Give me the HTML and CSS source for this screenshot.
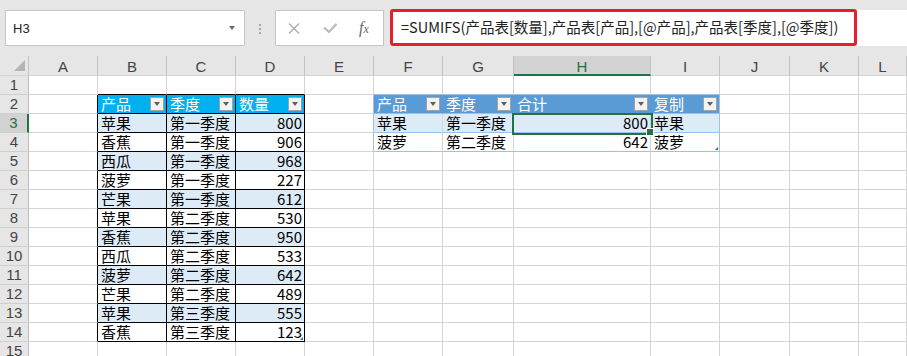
FILE: index.html
```html
<!DOCTYPE html>
<html lang="zh-CN">
<head>
  <meta charset="UTF-8" />
  <title>SUMIFS 产品表</title>
  <link rel="stylesheet" href="styles.css">
</head>
<body>
  <div class="formula-bar">
    <div class="name-box"><span>H3</span><i class="caret"></i></div>
    <div class="grip"><i></i><i></i><i></i></div>
    <div class="fx-box">
      <svg class="fx-cancel" width="12" height="11" viewBox="0 0 12 11"><path d="M1 0.5 L11 10.5 M11 0.5 L1 10.5" stroke="#a9a9a9" stroke-width="1.3" fill="none"/></svg>
      <svg class="fx-enter" width="14" height="10" viewBox="0 0 14 10"><path d="M1 4.5 L6 9 L13.5 0.8" stroke="#bababa" stroke-width="2.2" fill="none"/></svg>
      <span class="fx">f<small>x</small></span>
    </div>
    <div class="formula-input">
      <div class="formula-mark">=SUMIFS(产品表[数量],产品表[产品],[@产品],产品表[季度],[@季度])</div>
    </div>
  </div>

  <div class="sheet">
    <!-- column headers -->
    <div class="c corner"><svg width="11" height="11" viewBox="0 0 11 11"><polygon points="11,0 11,11 0,11" fill="#b4b4b4"/></svg></div>
    <div class="c ch">A</div><div class="c ch">B</div><div class="c ch">C</div><div class="c ch">D</div>
    <div class="c ch">E</div><div class="c ch">F</div><div class="c ch">G</div><div class="c ch sel-h">H</div>
    <div class="c ch">I</div><div class="c ch">J</div><div class="c ch">K</div><div class="c ch">L</div>

    <!-- row 1 -->
    <div class="c rh">1</div>
    <div class="c"></div><div class="c e-b"></div><div class="c e-b"></div><div class="c e-b"></div>
    <div class="c"></div><div class="c e2-b"></div><div class="c e2-b"></div><div class="c e2-b"></div>
    <div class="c e2-b"></div><div class="c"></div><div class="c"></div><div class="c"></div>

    <!-- row 2 -->
    <div class="c rh">2</div>
    <div class="c e-r"></div>
    <div class="c t1h"><span>产品</span><i class="dd"></i></div>
    <div class="c t1h"><span>季度</span><i class="dd"></i></div>
    <div class="c t1h"><span>数量</span><i class="dd"></i></div>
    <div class="c e2-r"></div>
    <div class="c t2h"><span>产品</span><i class="dd"></i></div>
    <div class="c t2h"><span>季度</span><i class="dd"></i></div>
    <div class="c t2h"><span>合计</span><i class="dd"></i></div>
    <div class="c t2h t2-end"><span>复制</span><i class="dd"></i></div>
    <div class="c"></div><div class="c"></div><div class="c"></div>

    <!-- row 3 -->
    <div class="c rh sel-r">3</div>
    <div class="c e-r"></div>
    <div class="c t1 band">苹果</div><div class="c t1 band">第一季度</div><div class="c t1 band num">800</div>
    <div class="c e2-r"></div>
    <div class="c t2 band">苹果</div><div class="c t2 band">第一季度</div>
    <div class="c t2 band num active">800</div>
    <div class="c t2 band t2-end">苹果</div>
    <div class="c"></div><div class="c"></div><div class="c"></div>

    <!-- row 4 -->
    <div class="c rh">4</div>
    <div class="c e-r"></div>
    <div class="c t1">香蕉</div><div class="c t1">第一季度</div><div class="c t1 num">906</div>
    <div class="c e2-r"></div>
    <div class="c t2">菠萝</div><div class="c t2">第二季度</div>
    <div class="c t2 num">642</div>
    <div class="c t2 t2-end rz">菠萝</div>
    <div class="c"></div><div class="c"></div><div class="c"></div>

    <!-- row 5 -->
    <div class="c rh">5</div>
    <div class="c e-r"></div>
    <div class="c t1 band">西瓜</div><div class="c t1 band">第一季度</div><div class="c t1 band num">968</div>
    <div class="c"></div><div class="c"></div><div class="c"></div><div class="c"></div>
    <div class="c"></div><div class="c"></div><div class="c"></div><div class="c"></div>

    <!-- row 6 -->
    <div class="c rh">6</div>
    <div class="c e-r"></div>
    <div class="c t1">菠萝</div><div class="c t1">第一季度</div><div class="c t1 num">227</div>
    <div class="c"></div><div class="c"></div><div class="c"></div><div class="c"></div>
    <div class="c"></div><div class="c"></div><div class="c"></div><div class="c"></div>

    <!-- row 7 -->
    <div class="c rh">7</div>
    <div class="c e-r"></div>
    <div class="c t1 band">芒果</div><div class="c t1 band">第一季度</div><div class="c t1 band num">612</div>
    <div class="c"></div><div class="c"></div><div class="c"></div><div class="c"></div>
    <div class="c"></div><div class="c"></div><div class="c"></div><div class="c"></div>

    <!-- row 8 -->
    <div class="c rh">8</div>
    <div class="c e-r"></div>
    <div class="c t1">苹果</div><div class="c t1">第二季度</div><div class="c t1 num">530</div>
    <div class="c"></div><div class="c"></div><div class="c"></div><div class="c"></div>
    <div class="c"></div><div class="c"></div><div class="c"></div><div class="c"></div>

    <!-- row 9 -->
    <div class="c rh">9</div>
    <div class="c e-r"></div>
    <div class="c t1 band">香蕉</div><div class="c t1 band">第二季度</div><div class="c t1 band num">950</div>
    <div class="c"></div><div class="c"></div><div class="c"></div><div class="c"></div>
    <div class="c"></div><div class="c"></div><div class="c"></div><div class="c"></div>

    <!-- row 10 -->
    <div class="c rh">10</div>
    <div class="c e-r"></div>
    <div class="c t1">西瓜</div><div class="c t1">第二季度</div><div class="c t1 num">533</div>
    <div class="c"></div><div class="c"></div><div class="c"></div><div class="c"></div>
    <div class="c"></div><div class="c"></div><div class="c"></div><div class="c"></div>

    <!-- row 11 -->
    <div class="c rh">11</div>
    <div class="c e-r"></div>
    <div class="c t1 band">菠萝</div><div class="c t1 band">第二季度</div><div class="c t1 band num">642</div>
    <div class="c"></div><div class="c"></div><div class="c"></div><div class="c"></div>
    <div class="c"></div><div class="c"></div><div class="c"></div><div class="c"></div>

    <!-- row 12 -->
    <div class="c rh">12</div>
    <div class="c e-r"></div>
    <div class="c t1">芒果</div><div class="c t1">第二季度</div><div class="c t1 num">489</div>
    <div class="c"></div><div class="c"></div><div class="c"></div><div class="c"></div>
    <div class="c"></div><div class="c"></div><div class="c"></div><div class="c"></div>

    <!-- row 13 -->
    <div class="c rh">13</div>
    <div class="c e-r"></div>
    <div class="c t1 band">苹果</div><div class="c t1 band">第三季度</div><div class="c t1 band num">555</div>
    <div class="c"></div><div class="c"></div><div class="c"></div><div class="c"></div>
    <div class="c"></div><div class="c"></div><div class="c"></div><div class="c"></div>

    <!-- row 14 -->
    <div class="c rh">14</div>
    <div class="c e-r"></div>
    <div class="c t1">香蕉</div><div class="c t1">第三季度</div><div class="c t1 num rz">123</div>
    <div class="c"></div><div class="c"></div><div class="c"></div><div class="c"></div>
    <div class="c"></div><div class="c"></div><div class="c"></div><div class="c"></div>

    <!-- row 15 -->
    <div class="c rh">15</div>
    <div class="c"></div><div class="c"></div><div class="c"></div><div class="c"></div>
    <div class="c"></div><div class="c"></div><div class="c"></div><div class="c"></div>
    <div class="c"></div><div class="c"></div><div class="c"></div><div class="c"></div>
  </div>
</body>
</html>
```

FILE: styles.css
```css
* {
  box-sizing: border-box;
}

html, body {
  margin: 0;
  padding: 0;
  height: 100%;
  overflow: hidden;
  background: #e6e6e6;
  font-family: "Noto Sans CJK SC", sans-serif;
}

/* formula bar */
.formula-bar {
  display: flex;
  align-items: flex-start;
  height: 56px;
  padding: 10px 0 0 5px;
}

.name-box {
  width: 240px;
  height: 36px;
  background: #fff;
  border: 1px solid #c6c6c6;
  display: flex;
  align-items: center;
  justify-content: space-between;
  padding: 0 9px 0 7px;
  font-family: "Liberation Sans", sans-serif;
  font-size: 13px;
  color: #222;
}

.caret {
  border-left: 3.5px solid transparent;
  border-right: 3.5px solid transparent;
  border-top: 4px solid #6b6b6b;
}

.grip {
  width: 30px;
  display: flex;
  flex-direction: column;
  align-items: center;
  gap: 2px;
  padding-top: 14px;
}

.grip i {
  width: 2px;
  height: 2px;
  background: #a6a6a6;
}

.fx-box {
  width: 109px;
  height: 36px;
  background: #fff;
  border: 1px solid #c6c6c6;
  display: flex;
  align-items: center;
  padding-left: 12px;
}

.fx-enter {
  margin-left: 23px;
}

.fx {
  margin-left: 22px;
  font-family: "Liberation Serif", serif;
  font-style: italic;
  font-size: 16px;
  color: #666;
}

.fx small {
  font-size: 12px;
}

.formula-input {
  flex: 1;
  height: 36px;
  margin-left: 6px;
  background: #fff;
}

.formula-mark {
  width: 467px;
  height: 37px;
  margin-top: -1px;
  border: 3px solid #e4202c;
  border-radius: 3px;
  padding-left: 8px;
  font-size: 14.5px;
  line-height: 30px;
  color: #222;
  white-space: nowrap;
}

/* grid */
.sheet {
  display: grid;
  grid-template-columns: 29px 69px 69px 69px 69px 69px 69px 71px 137px 69px 70px 69px 1fr;
  grid-template-rows: 20px;
  grid-auto-rows: 19px;
  background: #fff;
}

.c {
  position: relative;
  border-right: 1px solid #d4d4d4;
  border-bottom: 1px solid #d4d4d4;
  padding: 0 3px;
  font-size: 15px;
  line-height: 18px;
  color: #000;
  white-space: nowrap;
}

.corner {
  background: #e6e6e6;
  border-right-color: #c2c2c2;
  display: flex;
  justify-content: flex-end;
  align-items: flex-end;
  padding: 0 3px 4px 0;
}

.ch {
  background: #e6e6e6;
  border-right-color: #c2c2c2;
  text-align: center;
  font-family: "Liberation Sans", sans-serif;
  line-height: 21px;
  color: #444;
}

.rh {
  background: #e6e6e6;
  border-right-color: #bdbdbd;
  border-bottom-color: #cfcfcf;
  text-align: center;
  font-family: "Liberation Sans", sans-serif;
  padding: 0;
  color: #444;
}

.sel-h {
  background: #d2d2d2;
  color: #217346;
  border-bottom: 2px solid #217346;
}

.sel-r {
  background: #d2d2d2;
  color: #217346;
  border-right: 2px solid #217346;
}

.num {
  text-align: right;
  padding-right: 2px;
}

.band {
  background: #ddebf7;
}

/* table 1 : black grid */
.e-b {
  border-bottom-color: #000;
}

.e-r {
  border-right-color: #000;
}

.t1,
.t1h {
  border-color: #000;
}

.t1h {
  background: #00b0f0;
  color: #fff;
}

/* table 2 : blue style */
.e2-b {
  border-bottom-color: #9bc2e6;
}

.e2-r {
  border-right-color: #9bc2e6;
}

.t2h {
  background: #5b9bd5;
  color: #fff;
  border-right-color: #5b9bd5;
  border-bottom-color: #9bc2e6;
}

.t2 {
  border-bottom-color: #9bc2e6;
}

.t2-end {
  border-right-color: #9bc2e6;
}

.t1h,
.t2h {
  display: flex;
  align-items: center;
  justify-content: space-between;
  padding: 0 2px 0 3px;
}

.dd {
  width: 14px;
  height: 14px;
  background: #f3f3f3;
  border: 1px solid #a3a3a3;
  display: flex;
  align-items: center;
  justify-content: center;
}

.dd::after {
  content: "";
  border-left: 3.5px solid transparent;
  border-right: 3.5px solid transparent;
  border-top: 4px solid #5f5f5f;
}

/* table resize corner */
.rz::after {
  content: "";
  position: absolute;
  right: 1px;
  bottom: 1px;
  border-left: 3px solid transparent;
  border-bottom: 3px solid #2f5aa8;
}

/* active cell */
.active::after {
  content: "";
  position: absolute;
  left: -2px;
  top: -1px;
  right: -3px;
  bottom: -3px;
  border: 2px solid #217346;
  z-index: 1;
}

.active::before {
  content: "";
  position: absolute;
  right: -4px;
  bottom: -4px;
  width: 6px;
  height: 6px;
  background: #217346;
  border: 1px solid #fff;
  z-index: 2;
}
```
